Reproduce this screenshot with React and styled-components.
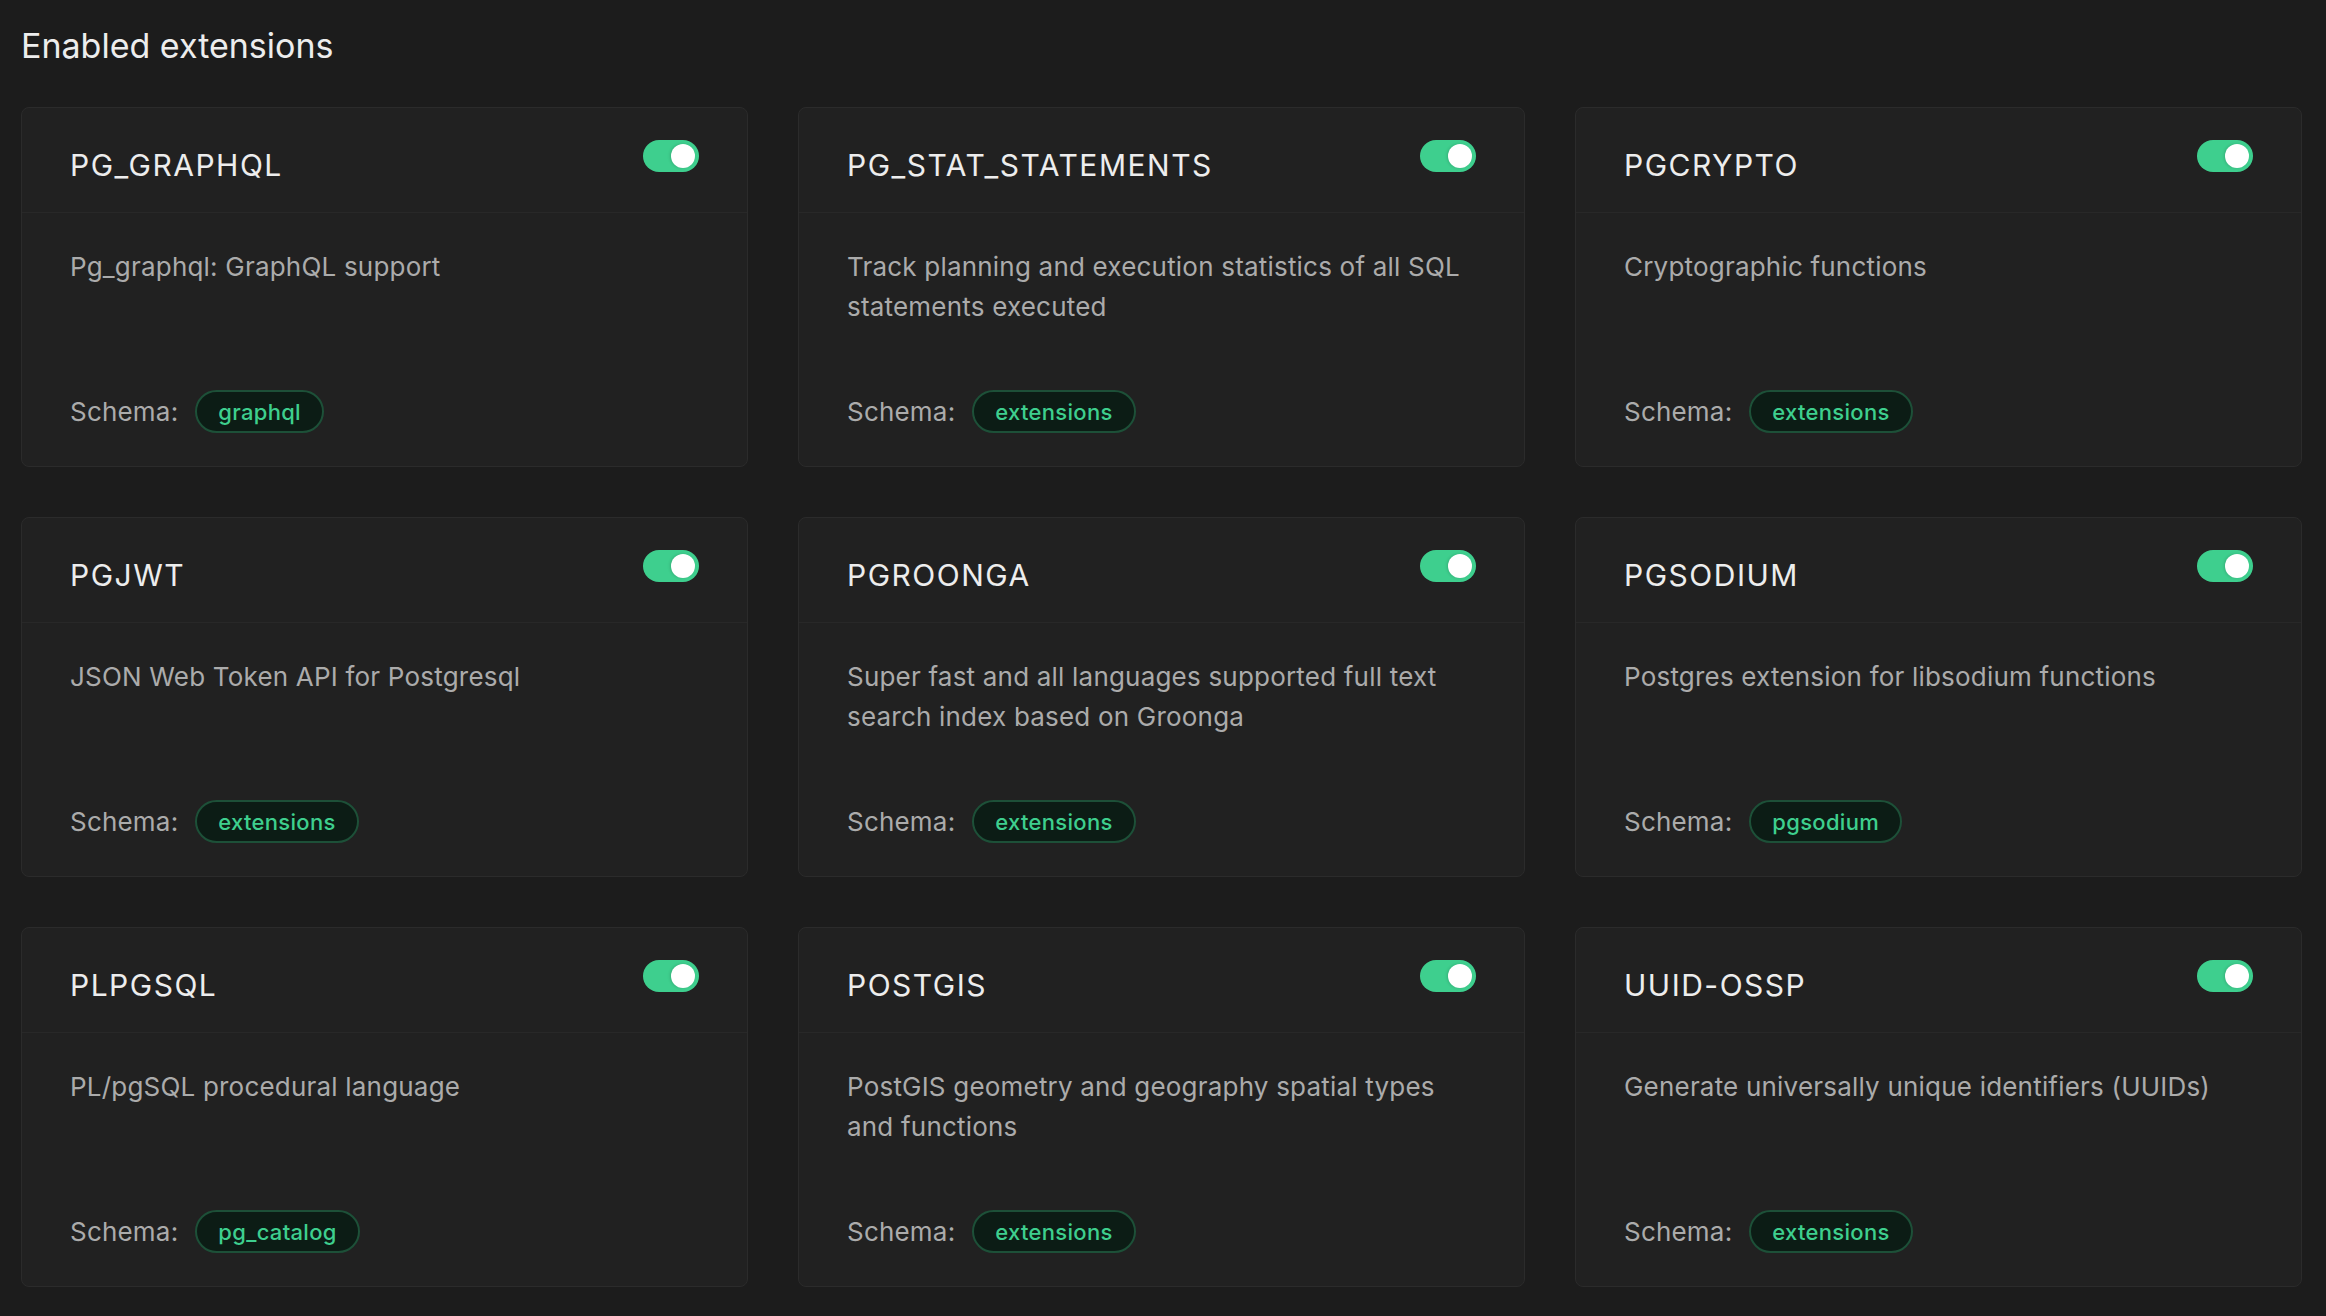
import React from 'react';
import styled, { createGlobalStyle } from 'styled-components';

// DATA
const EXTENSIONS = [
    { name: 'PG_GRAPHQL', description: 'Pg_graphql: GraphQL support', schema: 'graphql' },
    { name: 'PG_STAT_STATEMENTS', description: 'Track planning and execution statistics of all SQL statements executed', schema: 'extensions' },
    { name: 'PGCRYPTO', description: 'Cryptographic functions', schema: 'extensions' },
    { name: 'PGJWT', description: 'JSON Web Token API for Postgresql', schema: 'extensions' },
    { name: 'PGROONGA', description: 'Super fast and all languages supported full text search index based on Groonga', schema: 'extensions' },
    { name: 'PGSODIUM', description: 'Postgres extension for libsodium functions', schema: 'pgsodium' },
    { name: 'PLPGSQL', description: 'PL/pgSQL procedural language', schema: 'pg_catalog' },
    { name: 'POSTGIS', description: 'PostGIS geometry and geography spatial types and functions', schema: 'extensions' },
    { name: 'UUID-OSSP', description: 'Generate universally unique identifiers (UUIDs)', schema: 'extensions' },
];

const COLORS = {
    page: '#1c1c1c',
    card: '#212121',
    border: '#2b2b2b',
    divider: '#282828',
    heading: '#ededed',
    text: '#ababab',
    green: '#3ecf8e',
    badgeBg: '#0c1c15',
    badgeBorder: '#1d5038',
};

const ExtensionCard = ({ extension }) => {
    const [enabled, setEnabled] = React.useState(true);

    return (
        <Card>
            <CardHeader>
                <CardTitle>{extension.name}</CardTitle>
                <Toggle
                    role="switch"
                    aria-checked={enabled}
                    $on={enabled}
                    onClick={() => setEnabled(!enabled)}
                >
                    <Knob $on={enabled} />
                </Toggle>
            </CardHeader>
            <CardBody>
                <Description>{extension.description}</Description>
                <SchemaRow>
                    <SchemaLabel>Schema:</SchemaLabel>
                    <Badge>{extension.schema}</Badge>
                </SchemaRow>
            </CardBody>
        </Card>
    )
}

const App = () => {
    return (
        <>
            <GlobalStyle />
            <Page>
                <Heading>Enabled extensions</Heading>
                <Grid>
                    {EXTENSIONS.map((ext) => (
                        <ExtensionCard key={ext.name} extension={ext} />
                    ))}
                </Grid>
            </Page>
        </>
    )
}

const GlobalStyle = createGlobalStyle`
    * {
        box-sizing: border-box;
    }
    html, body {
        margin: 0;
        background-color: ${COLORS.page};
        font-family: Inter, "Noto Sans", sans-serif;
        -webkit-font-smoothing: antialiased;
    }
`

const Page = styled.main`
    min-height: 100vh;
    padding: 24px 24px 29px 21px;
    background-color: ${COLORS.page};
`

const Heading = styled.h2`
    margin: 0 0 39px;
    font-size: 34px;
    line-height: 44px;
    font-weight: 400;
    color: ${COLORS.heading};
`

const Grid = styled.div`
    display: grid;
    grid-template-columns: repeat(3, 1fr);
    grid-auto-rows: 360px;
    gap: 50px;
`

const Card = styled.article`
    display: flex;
    flex-direction: column;
    background-color: ${COLORS.card};
    border: 1px solid ${COLORS.border};
    border-radius: 8px;
    overflow: hidden;
`

const CardHeader = styled.header`
    display: flex;
    align-items: flex-start;
    justify-content: space-between;
    height: 105px;
    padding: 32px 48px 0;
    border-bottom: 1px solid ${COLORS.divider};
`

const CardTitle = styled.h3`
    margin: 4px 0 0;
    font-size: 30px;
    line-height: 42px;
    letter-spacing: 1.5px;
    font-weight: 400;
    color: ${COLORS.heading};
`

const Toggle = styled.button`
    position: relative;
    flex-shrink: 0;
    width: 56px;
    height: 32px;
    padding: 0;
    border: none;
    border-radius: 16px;
    background-color: ${(p) => (p.$on ? COLORS.green : '#3a3a3a')};
    cursor: pointer;
`

const Knob = styled.span`
    position: absolute;
    top: 4px;
    left: ${(p) => (p.$on ? '28px' : '4px')};
    width: 24px;
    height: 24px;
    border-radius: 50%;
    background-color: white;
    box-shadow: -1px 0 3px rgba(0, 0, 0, 0.15);
    transition: left 0.15s ease;
`

const CardBody = styled.div`
    flex: 1;
    display: flex;
    flex-direction: column;
    justify-content: space-between;
    padding: 34px 48px 33px;
`

const Description = styled.p`
    margin: 0;
    font-size: 26px;
    line-height: 40px;
    letter-spacing: 0.2px;
    color: ${COLORS.text};
`

const SchemaRow = styled.div`
    display: flex;
    align-items: center;
    gap: 17px;
`

const SchemaLabel = styled.span`
    font-size: 26px;
    line-height: 40px;
    letter-spacing: 0.2px;
    color: ${COLORS.text};
`

const Badge = styled.span`
    display: inline-flex;
    align-items: center;
    height: 43px;
    padding: 0 21px;
    border: 2px solid ${COLORS.badgeBorder};
    border-radius: 22px;
    background-color: ${COLORS.badgeBg};
    color: ${COLORS.green};
    font-size: 22px;
    letter-spacing: 0.3px;
    font-weight: 500;
`

export default App;
